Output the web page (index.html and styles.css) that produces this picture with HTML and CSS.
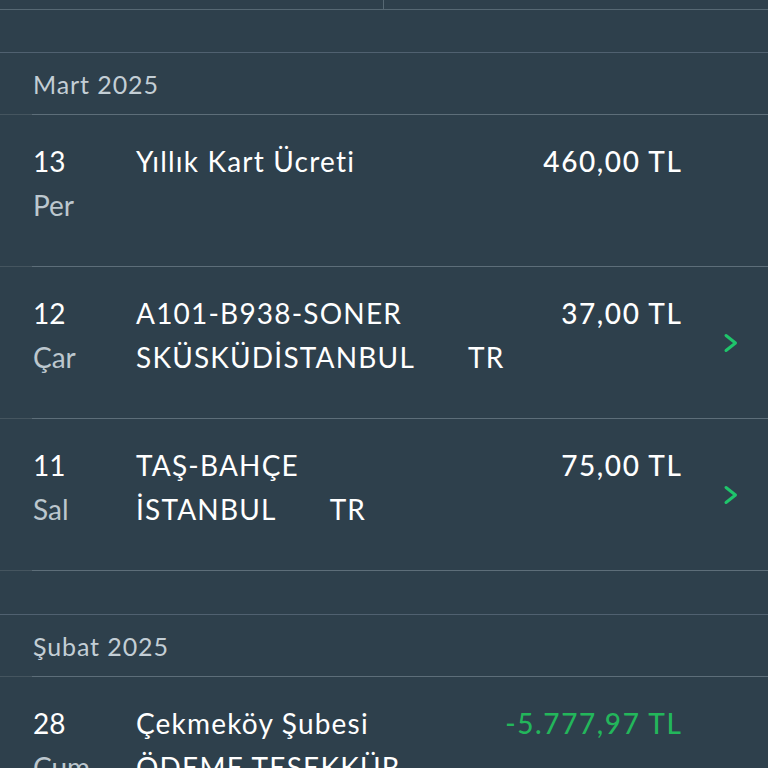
FILE: index.html
```html
<!DOCTYPE html>
<html lang="tr">
<head>
<meta charset="utf-8">
<title>Hesap Hareketleri</title>
<link rel="stylesheet" href="styles.css">
</head>
<body>
<div class="screen">
  <div class="tabs">
    <div class="tab"></div>
    <div class="tab"></div>
  </div>
  <div class="gap"></div>

  <div class="month">Mart 2025</div>
  <div class="sep"></div>

  <div class="row">
    <div class="day"><div class="num">13</div><div class="wd">Per</div></div>
    <div class="desc"><div>Yıllık Kart Ücreti</div></div>
    <div class="amt">460,00 TL</div>
    <div class="chev"></div>
  </div>
  <div class="sep"></div>

  <div class="row">
    <div class="day"><div class="num">12</div><div class="wd">Çar</div></div>
    <div class="desc"><div>A101-B938-SONER</div><div>SKÜSKÜDİSTANBUL<span class="cc">TR</span></div></div>
    <div class="amt">37,00 TL</div>
    <div class="chev"><svg width="16" height="20" viewBox="0 0 16 20"><path d="M3 2.5 L12.5 10 L3 17.5" fill="none" stroke="#1fc56b" stroke-width="3" stroke-linecap="round" stroke-linejoin="round"/></svg></div>
  </div>
  <div class="sep"></div>

  <div class="row">
    <div class="day"><div class="num">11</div><div class="wd">Sal</div></div>
    <div class="desc"><div>TAŞ-BAHÇE</div><div>İSTANBUL<span class="cc">TR</span></div></div>
    <div class="amt">75,00 TL</div>
    <div class="chev"><svg width="16" height="20" viewBox="0 0 16 20"><path d="M3 2.5 L12.5 10 L3 17.5" fill="none" stroke="#1fc56b" stroke-width="3" stroke-linecap="round" stroke-linejoin="round"/></svg></div>
  </div>
  <div class="sep"></div>
  <div class="gap small"></div>

  <div class="month">Şubat 2025</div>
  <div class="sep"></div>

  <div class="row">
    <div class="day"><div class="num">28</div><div class="wd">Cum</div></div>
    <div class="desc"><div>Çekmeköy Şubesi</div><div>ÖDEME TEŞEKKÜR</div></div>
    <div class="amt pos">-5.777,97 TL</div>
    <div class="chev"></div>
  </div>
</div>
</body>
</html>
```
FILE: styles.css
```css
* { box-sizing: border-box; }
html, body {
  margin: 0;
  padding: 0;
  background: #2e404c;
}
body {
  font-family: Lato, "Open Sans", sans-serif;
  color: #ffffff;
  overflow: hidden;
}
.screen {
  width: 768px;
  height: 768px;
  overflow: hidden;
  background: #2e404c;
}
.tabs {
  display: grid;
  grid-template-columns: 1fr 1fr;
  height: 10px;
  border-bottom: 1px solid #566873;
}
.tab:first-child {
  border-right: 1px solid #566873;
}
.gap {
  height: 43px;
  border-bottom: 1px solid #506170;
}
.gap.small {
  height: 44px;
}
.month {
  height: 61px;
  display: flex;
  align-items: center;
  padding-left: 33px;
  font-size: 25px;
  color: #c3ced5;
  letter-spacing: 0.9px;
}
.sep {
  height: 1px;
  background: linear-gradient(to right, #45555f 32px, #5d6e79 32px);
}
.row {
  height: 151px;
  display: grid;
  grid-template-columns: 103px 1fr auto 87px;
  padding: 24px 0 0 33px;
  font-size: 28px;
  line-height: 44px;
}
.num {
  color: #ffffff;
}
.wd {
  color: #bcc7ce;
}
.desc {
  color: #ffffff;
  white-space: nowrap;
  letter-spacing: 1.2px;
}
.cc {
  margin-left: 53px;
}
.amt {
  text-align: right;
  color: #ffffff;
  font-weight: 500;
  letter-spacing: 1.6px;
  margin-right: -1.6px;
}
.amt.pos {
  color: #23b65b;
}
.chev {
  display: flex;
  align-items: center;
  padding-left: 42px;
  margin-top: -24px;
}
.chev svg {
  display: block;
}
```
